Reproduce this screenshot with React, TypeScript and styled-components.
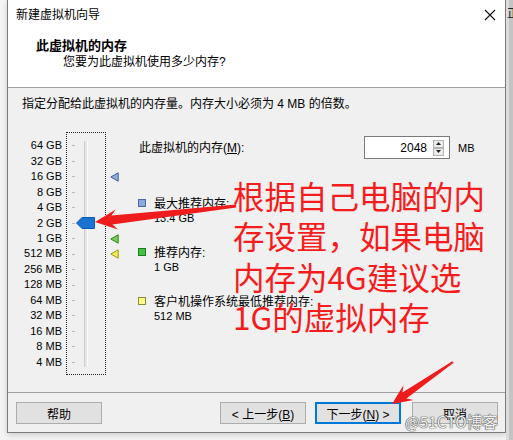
import React from "react";
import styled, { createGlobalStyle, css } from "styled-components";

const UI_FONT = `"Liberation Sans", "Noto Sans CJK SC", sans-serif`;

const GlobalStyle = createGlobalStyle`
  html, body { margin: 0; padding: 0; background: #f2f2f2; }
  body { font-family: ${UI_FONT}; font-size: 12px; color: #000; }
`;

const Screen = styled.div`
  position: relative;
  width: 513px;
  height: 440px;
  display: flex;
  overflow: hidden;
  background: #f4f4f4;
`;

const Gutter = styled.div`
  flex: none;
  width: 7px;
`;

const Wizard = styled.div`
  flex: none;
  width: 499px;
  height: 433px;
  box-sizing: border-box;
  border: 1px solid #7a7a7a;
  border-top: none;
  display: flex;
  flex-direction: column;
  background: #f0f0f0;
  box-shadow: 0 2px 6px rgba(0, 0, 0, 0.16);
`;

const BackWindow = styled.div`
  flex: 1;
  background: linear-gradient(90deg, #dcdcdc 0 3px, #c4c4c4 3px);
  overflow: hidden;
  font-family: "Noto Sans CJK SC", sans-serif;
  font-size: 12px;
  line-height: 12px;
  padding-top: 7px;
  padding-left: 1px;
  color: #222;
  white-space: nowrap;
`;

/* ---------- header ---------- */

const Header = styled.header`
  flex: none;
  height: 88px;
  box-sizing: border-box;
  background: #fff;
  border-bottom: 1px solid #a0a0a0;
`;

const TitleBar = styled.div`
  height: 30px;
  display: flex;
  align-items: center;
  justify-content: space-between;
  padding: 0 9px 0 8px;
`;

const WindowTitle = styled.span`
  font-size: 12px;
  line-height: 16px;
`;

const Heading = styled.div`
  padding: 8px 0 0 28px;
  font-weight: bold;
  font-size: 13px;
  line-height: 16px;
`;

const Subheading = styled.div`
  padding-left: 55px;
  line-height: 16px;
`;

/* ---------- body ---------- */

const Body = styled.main`
  flex: 1;
  padding: 8px 0 0 14px;
`;

const Instruction = styled.p`
  margin: 0;
  line-height: 16px;
`;

const MemoryArea = styled.div`
  display: flex;
  align-items: flex-start;
  margin-top: 20px;
`;

const STOP = 15.46;

const ScaleLabels = styled.div`
  width: 40px;
  padding-top: 6.27px;
  display: flex;
  flex-direction: column;
`;

const ScaleLabel = styled.div`
  height: ${STOP}px;
  line-height: ${STOP}px;
  text-align: right;
  font-size: 11px;
  white-space: nowrap;
`;

const SliderFrame = styled.div`
  margin-left: 4px;
  width: 40px;
  height: 243px;
  box-sizing: border-box;
  border: 1px dotted #222;
  padding-top: 5.27px;
  display: flex;
  flex-direction: column;
  background: linear-gradient(90deg, #cdcdcd 0 1px, #e6e6e6 1px 3px, #fafafa 3px 4px)
    17px 8px / 4px 226px no-repeat;
`;

const SliderStop = styled.div`
  height: ${STOP}px;
  display: flex;
  align-items: center;
`;

const Tick = styled.span`
  flex: none;
  margin-left: 5px;
  width: 3px;
  height: 1px;
  background: #b9b9b9;
`;

const ThumbShape = styled.svg`
  flex: none;
  margin-left: 1px;
  display: block;
`;

const Markers = styled.div`
  margin-left: 4px;
  width: 9px;
  padding-top: 6.27px;
  display: flex;
  flex-direction: column;
`;

const MarkerSlot = styled.div`
  height: ${STOP}px;
  display: flex;
  align-items: center;
`;

const Settings = styled.div`
  margin-left: 20px;
  padding-top: 4px;
  display: flex;
  flex-direction: column;
`;

const MemoryRow = styled.div`
  display: flex;
  align-items: center;
  height: 23px;
`;

const FieldLabel = styled.label`
  width: 225px;
  line-height: 16px;
`;

const SpinBox = styled.div`
  width: 86px;
  height: 23px;
  box-sizing: border-box;
  border: 1px solid #7a7a7a;
  background: #fff;
  display: flex;
  align-items: center;
  justify-content: flex-end;
  padding-right: 5px;
`;

const SpinValue = styled.span`
  margin-right: 6px;
  font-size: 12px;
`;

const SpinButtons = styled.div`
  display: flex;
  flex-direction: column;
`;

const SpinButton = styled.span`
  width: 11px;
  height: 8px;
  box-sizing: border-box;
  border: 1px solid #b4b4b4;
  background: #ececec;
  display: flex;
  align-items: center;
  justify-content: center;
`;

const Unit = styled.span`
  margin-left: 8px;
  font-size: 11px;
`;

const Legend = styled.div`
  margin-top: 38px;
  display: flex;
  flex-direction: column;
  gap: 21px;
`;

const LegendItem = styled.div`
  display: flex;
  align-items: flex-start;
`;

const Swatch = styled.span<{ $fill: string; $edge: string }>`
  flex: none;
  width: 8px;
  height: 8px;
  box-sizing: border-box;
  margin: 2px 0 0 -1px;
  border: 1px solid ${(p) => p.$edge};
  background: ${(p) => p.$fill};
`;

const LegendText = styled.div`
  margin-left: 8px;
  line-height: 14px;
`;

const LegendValue = styled.div`
  font-size: 11px;
`;

/* ---------- footer ---------- */

const Footer = styled.footer`
  flex: none;
  height: 40px;
  box-sizing: border-box;
  border-top: 1px solid #a0a0a0;
  display: flex;
  align-items: flex-start;
  padding: 9px 7px 0 8px;
`;

const Spacer = styled.div`
  flex: 1;
`;

const Button = styled.button<{ $primary?: boolean; $gap?: number }>`
  width: 86px;
  height: 22px;
  box-sizing: border-box;
  margin: 0 0 0 ${(p) => p.$gap ?? 0}px;
  padding: 0;
  border: 1px solid #adadad;
  background: #e1e1e1;
  font-family: ${UI_FONT};
  font-size: 12px;
  color: #000;
  ${(p) =>
    p.$primary &&
    css`
      border: 2px solid #0078d7;
    `}
`;

const Key = styled.u`
  text-decoration: underline;
  text-underline-offset: 1px;
`;

/* ---------- overlays ---------- */

const Note = styled.div`
  position: absolute;
  left: 233px;
  top: 175px;
  font-family: "Noto Sans CJK SC", sans-serif;
  font-size: 31.5px;
  line-height: 40.3px;
  color: #f41c1c;
  white-space: nowrap;
  pointer-events: none;
`;

const Arrows = styled.svg`
  position: absolute;
  left: 0;
  top: 0;
  pointer-events: none;
`;

const Watermark = styled.div`
  position: absolute;
  left: 405px;
  top: 411px;
  font-family: "Noto Sans CJK SC", sans-serif;
  font-size: 15.5px;
  line-height: 20px;
  color: #f2f2f2;
  text-shadow: 0 0 1px #444, 0 0 1px #444, 0 0 1px #666;
  white-space: nowrap;
  pointer-events: none;
`;

const scale = [
  "64 GB", "32 GB", "16 GB", "8 GB", "4 GB", "2 GB", "1 GB",
  "512 MB", "256 MB", "128 MB", "64 MB", "32 MB", "16 MB", "8 MB", "4 MB",
];

const THUMB_INDEX = 5;

const markers: Record<number, { fill: string; edge: string }> = {
  2: { fill: "#93acd8", edge: "#3f5f9a" },
  6: { fill: "#7cc95a", edge: "#2e8a1c" },
  7: { fill: "#f2ee50", edge: "#9b971c" },
};

const Marker = ({ fill, edge }: { fill: string; edge: string }) => (
  <svg width="9" height="10" viewBox="0 0 9 10">
    <polygon points="0.8,5 8.2,0.8 8.2,9.2" fill={fill} stroke={edge} strokeWidth="1" />
  </svg>
);

const Thumb = () => (
  <ThumbShape width="19" height="12" viewBox="0 0 19 12">
    <polygon points="0.5,6 6,0.5 18.5,0.5 18.5,11.5 6,11.5" fill="#1a73d2" stroke="#0b5cb5" strokeWidth="1" />
  </ThumbShape>
);

const CloseGlyph = () => (
  <svg width="12" height="12" viewBox="0 0 12 12">
    <path d="M1 1 L11 11 M11 1 L1 11" stroke="#111" strokeWidth="1.1" fill="none" />
  </svg>
);

const Caret = ({ up }: { up?: boolean }) => (
  <svg width="5" height="3" viewBox="0 0 5 3">
    <polygon points={up ? "0,3 5,3 2.5,0" : "0,0 5,0 2.5,3"} fill="#222" />
  </svg>
);

export default function App() {
  return (
    <>
      <GlobalStyle />
      <Screen>
        <Gutter />
        <Wizard>
          <Header>
            <TitleBar>
              <WindowTitle>新建虚拟机向导</WindowTitle>
              <CloseGlyph />
            </TitleBar>
            <Heading>此虚拟机的内存</Heading>
            <Subheading>您要为此虚拟机使用多少内存?</Subheading>
          </Header>

          <Body>
            <Instruction>指定分配给此虚拟机的内存量。内存大小必须为 4 MB 的倍数。</Instruction>
            <MemoryArea>
              <ScaleLabels>
                {scale.map((s) => (
                  <ScaleLabel key={s}>{s}</ScaleLabel>
                ))}
              </ScaleLabels>
              <SliderFrame>
                {scale.map((s, i) => (
                  <SliderStop key={s}>
                    <Tick />
                    {i === THUMB_INDEX && <Thumb />}
                  </SliderStop>
                ))}
              </SliderFrame>
              <Markers>
                {scale.map((s, i) => (
                  <MarkerSlot key={s}>{markers[i] && <Marker {...markers[i]} />}</MarkerSlot>
                ))}
              </Markers>
              <Settings>
                <MemoryRow>
                  <FieldLabel>
                    此虚拟机的内存(<Key>M</Key>):
                  </FieldLabel>
                  <SpinBox>
                    <SpinValue>2048</SpinValue>
                    <SpinButtons>
                      <SpinButton>
                        <Caret up />
                      </SpinButton>
                      <SpinButton>
                        <Caret />
                      </SpinButton>
                    </SpinButtons>
                  </SpinBox>
                  <Unit>MB</Unit>
                </MemoryRow>
                <Legend>
                  <LegendItem>
                    <Swatch $fill="#8ea7d6" $edge="#4a6aa6" />
                    <LegendText>
                      最大推荐内存:
                      <LegendValue>13.4 GB</LegendValue>
                    </LegendText>
                  </LegendItem>
                  <LegendItem>
                    <Swatch $fill="#45bf45" $edge="#1d7a1d" />
                    <LegendText>
                      推荐内存:
                      <LegendValue>1 GB</LegendValue>
                    </LegendText>
                  </LegendItem>
                  <LegendItem>
                    <Swatch $fill="#ffff8a" $edge="#8a8a3a" />
                    <LegendText>
                      客户机操作系统最低推荐内存:
                      <LegendValue>512 MB</LegendValue>
                    </LegendText>
                  </LegendItem>
                </Legend>
              </Settings>
            </MemoryArea>
          </Body>

          <Footer>
            <Button>帮助</Button>
            <Spacer />
            <Button>
              &lt; 上一步(<Key>B</Key>)
            </Button>
            <Button $primary $gap={9}>
              下一步(<Key>N</Key>) &gt;
            </Button>
            <Button $gap={11}>取消</Button>
          </Footer>
        </Wizard>
        <BackWindow>正</BackWindow>

        <Note>
          <div>根据自己电脑的内</div>
          <div>存设置，如果电脑</div>
          <div>内存为4G建议选</div>
          <div>1G的虚拟内存</div>
        </Note>

        <Arrows width="513" height="440" viewBox="0 0 513 440">
          <polygon
            fill="#ee1c1c"
            points="95,222 117.9,229.4 112.4,224.6 236.2,207.5 235.8,204.5 111.4,215.6 115.7,209.6"
          />
          <polygon
            fill="#ee1c1c"
            points="392,404 413.6,400.1 406.4,398.4 453.6,362.8 452.4,361.2 402.4,392.6 403.4,385.3"
          />
        </Arrows>

        <Watermark>@51CTO博客</Watermark>
      </Screen>
    </>
  );
}
